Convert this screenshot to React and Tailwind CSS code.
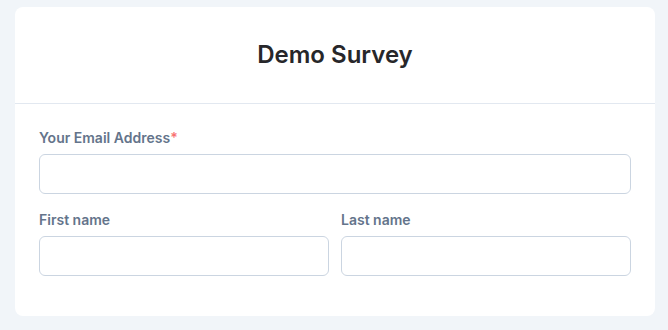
const Field = ({ label, required, className = '' }) => (
    <div className={className}>
        <label className="block text-sm font-semibold leading-5 text-[#64748b] mb-1.5">
            {label}
            {required && <span className="text-[#f87171]">*</span>}
        </label>
        <input
            type="text"
            className="block w-full h-10 rounded-md border border-[#cbd5e1] bg-white px-3 text-sm outline-none"
        />
    </div>
);

const App = () => {
    return (
        <div className="min-h-[330px] w-full bg-[#f1f5f9] pl-[15px] pt-[7px] pb-[14px] font-['Inter',sans-serif]">
            <div className="w-[640px] bg-white rounded-lg overflow-hidden">
                <div className="h-[97px] flex items-center justify-center border-b border-[#e2e8f0]">
                    <h1 className="text-2xl font-semibold text-[#27272a]">Demo Survey</h1>
                </div>
                <div className="px-6 pt-6 pb-10">
                    <Field label="Your Email Address" required className="mb-4" />
                    <div className="grid grid-cols-2 gap-3">
                        <Field label="First name" />
                        <Field label="Last name" />
                    </div>
                </div>
            </div>
        </div>
    );
};

export default App;
